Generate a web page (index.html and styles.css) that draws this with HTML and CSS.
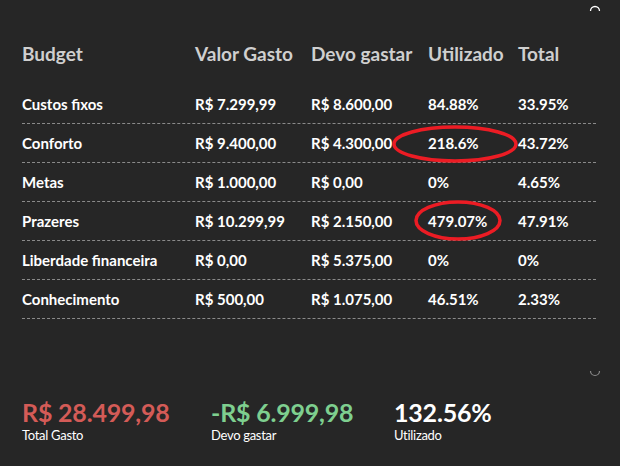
FILE: index.html
```html
<!DOCTYPE html>
<html>
<head>
<meta charset="utf-8">
<link rel="stylesheet" href="styles.css">
</head>
<body>
<div class="panel">
  <svg class="arc arc-top" width="12" height="8" viewBox="0 0 12 8"><path d="M1.5 7 A4.5 4.5 0 0 1 10.5 7" fill="none" stroke="#ffffff" stroke-width="1.3"/></svg>
  <div class="table">
    <div class="row head">
      <div>Budget</div><div>Valor Gasto</div><div>Devo gastar</div><div>Utilizado</div><div>Total</div>
    </div>
    <div class="row">
      <div>Custos fixos</div><div>R$ 7.299,99</div><div>R$ 8.600,00</div><div>84.88%</div><div>33.95%</div>
    </div>
    <div class="row">
      <div>Conforto</div><div>R$ 9.400,00</div><div>R$ 4.300,00</div><div class="mark"><span>218.6%</span><svg class="ellipse e1" width="126" height="38" viewBox="0 0 126 38"><ellipse cx="63" cy="19" rx="61" ry="17" fill="none" stroke="#ec1c24" stroke-width="3.5"/></svg></div><div>43.72%</div>
    </div>
    <div class="row">
      <div>Metas</div><div>R$ 1.000,00</div><div>R$ 0,00</div><div>0%</div><div>4.65%</div>
    </div>
    <div class="row">
      <div>Prazeres</div><div>R$ 10.299,99</div><div>R$ 2.150,00</div><div class="mark"><span>479.07%</span><svg class="ellipse e2" width="88" height="41" viewBox="0 0 88 41"><ellipse cx="44" cy="20.5" rx="42" ry="18.5" fill="none" stroke="#ec1c24" stroke-width="3.5"/></svg></div><div>47.91%</div>
    </div>
    <div class="row">
      <div>Liberdade financeira</div><div>R$ 0,00</div><div>R$ 5.375,00</div><div>0%</div><div>0%</div>
    </div>
    <div class="row">
      <div>Conhecimento</div><div>R$ 500,00</div><div>R$ 1.075,00</div><div>46.51%</div><div>2.33%</div>
    </div>
  </div>
  <svg class="arc arc-bottom" width="12" height="8" viewBox="0 0 12 8"><path d="M1.5 1 A4.5 4.5 0 0 0 10.5 1" fill="none" stroke="#8a8a8a" stroke-width="1.2"/></svg>
  <div class="stats">
    <div class="stat"><div class="big red">R$ 28.499,98</div><div class="label">Total Gasto</div></div>
    <div class="stat"><div class="big green">-R$ 6.999,98</div><div class="label">Devo gastar</div></div>
    <div class="stat"><div class="big white">132.56%</div><div class="label">Utilizado</div></div>
  </div>
</div>
</body>
</html>
```
FILE: styles.css
```css
html, body {
  margin: 0;
  padding: 0;
  background: #262626;
}
body {
  font-family: Lato, "Open Sans", sans-serif;
  color: #ffffff;
  width: 620px;
  height: 466px;
  overflow: hidden;
}
.panel {
  position: relative;
  width: 620px;
  height: 466px;
  padding: 30px 24px 0 22px;
  box-sizing: border-box;
}
.arc {
  position: absolute;
}
.arc-top { left: 589px; top: 4px; }
.arc-bottom { left: 589px; top: 370px; }
.table {
  width: 574px;
}
.row {
  display: grid;
  grid-template-columns: 173px 116px 117px 90px 78px;
  align-items: center;
  height: 38px;
  border-bottom: 1px dashed #8a8a8a;
  font-weight: 700;
  font-size: 15px;
  white-space: nowrap;
}
.row > div {
  line-height: 18px;
}
.row.head {
  height: 48px;
  margin-bottom: 7px;
  border-bottom: none;
  font-size: 19px;
  color: #cfcfcf;
}
.mark {
  position: relative;
}
.ellipse {
  position: absolute;
  pointer-events: none;
}
.e1 { left: -36px; top: calc(50% - 18px); }
.e2 { left: -14px; top: calc(50% - 21px); }
.stats {
  display: grid;
  grid-template-columns: 189px 183px auto;
  margin-top: 79px;
}
.big {
  font-size: 25px;
  font-weight: 700;
  line-height: 29px;
  letter-spacing: -0.2px;
}
.red { color: #d45b57; }
.green { color: #7ecf8f; }
.white { color: #ffffff; }
.label {
  font-size: 13px;
  line-height: 16px;
  letter-spacing: -0.3px;
  color: #ffffff;
}
```
